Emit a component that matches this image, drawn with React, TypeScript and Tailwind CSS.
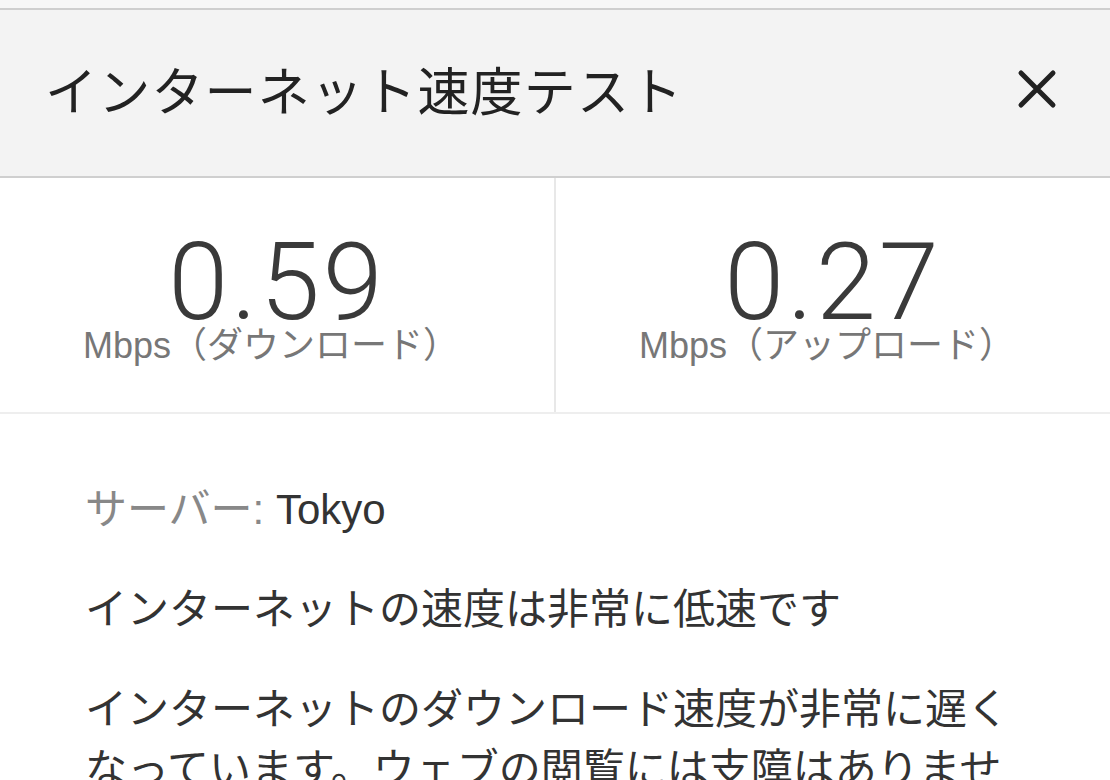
import React from 'react';

const jp = '"Liberation Sans", "Noto Sans CJK JP", sans-serif';

const Stat = ({ value, label, divider }: { value: string; label: string; divider?: boolean }) => (
  <div className={`flex flex-1 flex-col items-center pt-[58px] ${divider ? 'border-r-2 border-[#e8e8e8]' : ''}`}>
    <div
      className="text-[108px] font-light leading-[92px] tracking-[3px] text-[#3a3a3a]"
      style={{ fontFamily: 'Roboto, "Liberation Sans", sans-serif' }}
    >
      {value}
    </div>
    <div className="mr-[12px] text-[36px] leading-none text-[#777]">{label}</div>
  </div>
);

export default function App() {
  return (
    <div className="h-[780px] w-[1110px] overflow-hidden bg-white" style={{ fontFamily: jp }}>
      <div className="h-[8px] bg-[#f7f7f7]" />
      <div className="flex h-[170px] items-center justify-between border-y-2 border-[#cfcfcf] bg-[#f3f3f3] pl-[45px] pr-[53px]">
        <h1 className="text-[52px] font-normal leading-none tracking-[1.2px] text-[#222]">インターネット速度テスト</h1>
        <button className="mb-[8px] flex h-[40px] w-[40px] items-center justify-center" aria-label="閉じる">
          <svg width="40" height="40" viewBox="0 0 40 40" fill="none" stroke="#222" strokeWidth="5" strokeLinecap="round">
            <path d="M4 4 L36 36 M36 4 L4 36" />
          </svg>
        </button>
      </div>
      <div className="flex h-[236px] border-b-2 border-[#eeeeee]">
        <Stat value="0.59" label="Mbps（ダウンロード）" divider />
        <Stat value="0.27" label="Mbps（アップロード）" />
      </div>
      <div className="pl-[85px] pt-[66px] text-[42px] leading-[60px] text-[#333]">
        <p>
          <span className="text-[#888]">サーバー: </span>Tokyo
        </p>
        <p className="mt-[40px]">インターネットの速度は非常に低速です</p>
        <p className="mt-[40px] w-[940px]">
          インターネットのダウンロード速度が非常に遅くなっています。ウェブの閲覧には支障はありませんが、動画の再生や大きなファイルのダウンロードには時間がかかる可能性があります。
        </p>
      </div>
    </div>
  );
}
